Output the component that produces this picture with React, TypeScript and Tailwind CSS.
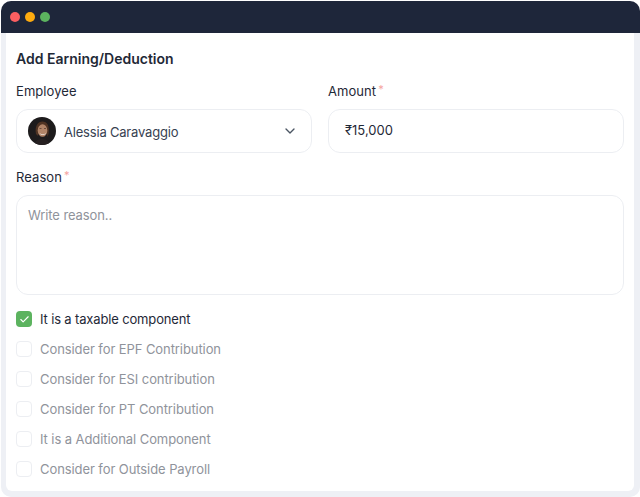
import React from "react";
import { ChevronDown, Check } from "lucide-react";

const options = [
  "Consider for EPF Contribution",
  "Consider for ESI contribution",
  "Consider for PT Contribution",
  "It is a Additional Component",
  "Consider for Outside Payroll",
];

function Avatar() {
  return (
    <svg width="28" height="28" viewBox="0 0 28 28" className="shrink-0 rounded-full">
      <rect width="28" height="28" fill="#1d1b1c" />
      <path d="M6 28c1-4 4-6 8-6s7 2 8 6z" fill="#262021" />
      <path d="M8 17C6.500 9 10 4.500 14.500 4.500S22 9 20.500 17l-1 3-1-10-7-1.500L10 19z" fill="#4f3323" />
      <ellipse cx="14.500" cy="13.500" rx="4.800" ry="6.300" fill="#b08468" />
      <path d="M11.500 16c2 1.800 4.500 1.800 6.500 0-1 2.800-5.500 2.800-6.500 0z" fill="#e9dfd8" />
      <path d="M11.500 11.500h2M16 11.500h2" stroke="#5a3f33" strokeWidth="0.8" />
    </svg>
  );
}

function Label({ text, required }: { text: string; required?: boolean }) {
  return (
    <div className="flex h-5 items-center text-[13px] leading-5 tracking-[0.005em] text-[#1f2937]">
      {text}
      {required && <span className="ml-[2px] -mt-1 text-[11px] text-[#f5a3a0]">*</span>}
    </div>
  );
}

export default function App() {
  return (
    <div className="h-[497px] w-[640px] bg-white font-['Inter',sans-serif]">
      <div className="ml-px mt-px flex h-[496px] w-[639px] flex-col overflow-hidden rounded-[10px] bg-[#eef0f5]">
        <div className="flex h-8 shrink-0 items-center gap-[5px] bg-[#1e263a] pl-[9px]">
          <span className="size-[10px] rounded-full bg-[#fc5f61]" />
          <span className="size-[10px] rounded-full bg-[#fdab0f]" />
          <span className="size-[10px] rounded-full bg-[#5cb35f]" />
        </div>
        <div className="mr-[6px] mb-[6px] ml-[5px] flex-1 rounded-b-[6px] bg-white px-[10px] pt-4">
          <h1 className="text-[14px] leading-5 font-semibold text-[#1f2937]">Add Earning/Deduction</h1>

          <div className="mt-3 grid grid-cols-2 gap-4">
            <div>
              <Label text="Employee" />
              <div className="mt-2 flex h-11 items-center rounded-xl border border-[#eceef2] pr-[13px] pl-[11px]">
                <Avatar />
                <span className="mt-[2px] ml-2 flex-1 text-[13px] leading-5 tracking-[-0.015em] text-[#374151]">Alessia Caravaggio</span>
                <ChevronDown size={16} strokeWidth={2} className="text-[#4b5563]" />
              </div>
            </div>
            <div>
              <Label text="Amount" required />
              <div className="mt-2 flex h-11 items-center rounded-xl border border-[#eceef2] pl-4 text-[13px] text-[#1f2937]">
                ₹15,000
              </div>
            </div>
          </div>

          <div className="mt-[14px]">
            <Label text="Reason" required />
            <div className="mt-2 h-[100px] rounded-xl border border-[#eceef2] pt-[9px] pl-[11px] text-[13px] leading-5 tracking-[-0.1px] text-[#8f939b]">
              Write reason..
            </div>
          </div>

          <div className="mt-4 flex flex-col gap-[14px]">
            <div className="flex h-4 items-center gap-2 text-[13px] tracking-[-0.15px] text-[#1f2937]">
              <span className="flex size-4 items-center justify-center rounded-[4px] bg-[#5cb35f]">
                <Check size={11} strokeWidth={2.5} className="text-white" />
              </span>
              <span className="leading-5">It is a taxable component</span>
            </div>
            {options.map((o) => (
              <div key={o} className="flex h-4 items-center gap-2 text-[13px] tracking-[-0.08px] text-[#8f939b]">
                <span className="size-4 rounded-[4px] border border-[#eceef2]" />
                <span className="leading-5">{o}</span>
              </div>
            ))}
          </div>
        </div>
      </div>
    </div>
  );
}
